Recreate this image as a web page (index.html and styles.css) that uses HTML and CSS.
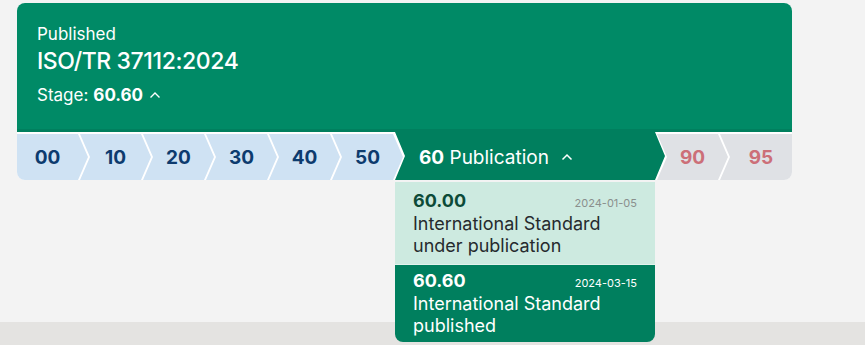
FILE: index.html
```html
<!DOCTYPE html>
<html lang="en">
<head>
    <meta charset="UTF-8">
    <meta name="viewport" content="width=device-width, initial-scale=1.0">
    <title>ISO/TR 37112:2024</title>
    <link rel="stylesheet" href="styles.css">
</head>
<body>
    <main class="page">
        <section class="card">
            <header class="card-head">
                <div class="status">Published</div>
                <h1 class="ref">ISO/TR 37112:2024</h1>
                <div class="stage-line">
                    Stage: <strong>60.60</strong>
                    <svg class="caret" width="12" height="8" viewBox="0 0 12 8"><path d="M1.5 6.5 L6 2 L10.5 6.5" fill="none" stroke="currentColor" stroke-width="1.4"/></svg>
                </div>
            </header>

            <ol class="stages">
                <li class="stage done first"><span class="shape">00</span></li>
                <li class="stage done"><span class="shape">10</span></li>
                <li class="stage done"><span class="shape">20</span></li>
                <li class="stage done"><span class="shape">30</span></li>
                <li class="stage done"><span class="shape">40</span></li>
                <li class="stage done"><span class="shape">50</span></li>
                <li class="stage current">
                    <span class="shape">
                        <strong>60</strong>&nbsp;Publication
                        <svg class="caret" width="12" height="8" viewBox="0 0 12 8"><path d="M1.5 6.5 L6 2 L10.5 6.5" fill="none" stroke="currentColor" stroke-width="1.5"/></svg>
                    </span>
                    <div class="substages">
                        <div class="substage">
                            <div class="sub-top">
                                <span class="sub-code">60.00</span>
                                <span class="sub-date">2024-01-05</span>
                            </div>
                            <div class="sub-name">International Standard under publication</div>
                        </div>
                        <div class="substage active">
                            <div class="sub-top">
                                <span class="sub-code">60.60</span>
                                <span class="sub-date">2024-03-15</span>
                            </div>
                            <div class="sub-name">International Standard published</div>
                        </div>
                    </div>
                </li>
                <li class="stage todo"><span class="shape">90</span></li>
                <li class="stage todo last"><span class="shape">95</span></li>
            </ol>
        </section>
    </main>
    <footer class="bottom-strip"></footer>
</body>
</html>
```

FILE: styles.css
```css
* {
    box-sizing: border-box;
}
body {
    font-family: Inter, "Noto Sans", Arial, sans-serif;
    margin: 0;
    height: 345px;
    display: flex;
    flex-direction: column;
    background-color: #f3f3f3;
    overflow: hidden;
}
.page {
    flex: 1;
    padding: 3px 0 0 17px;
}
.bottom-strip {
    height: 23px;
    background-color: #e4e3e1;
}
.card {
    width: 775px;
    background: #fff;
    border-radius: 8px;
    position: relative;
    z-index: 1;
}
.card-head {
    background-color: #008a66;
    color: #fff;
    border-radius: 8px 8px 0 0;
    border-bottom: 3px solid #007f5e;
    height: 129px;
    padding: 21px 20px 0 20px;
}
.status {
    font-size: 17px;
    line-height: 20px;
}
.ref {
    margin: 2px 0 0 0;
    font-size: 23px;
    font-weight: 500;
    letter-spacing: -0.4px;
    line-height: 30px;
}
.stage-line {
    margin-top: 8px;
    font-size: 17px;
    line-height: 22px;
    display: flex;
    align-items: center;
    gap: 5px;
}
.stage-line strong {
    font-weight: 700;
}
.stage-line .caret {
    margin-left: 1px;
}
.stages {
    list-style: none;
    margin: 2px 0 0 0;
    padding: 0;
    display: flex;
    height: 46px;
}
.stage {
    position: relative;
    margin-left: -8px;
    width: 71px;
}
.stage.first {
    margin-left: 0;
}
.shape {
    display: flex;
    align-items: center;
    justify-content: center;
    height: 100%;
    font-size: 19px;
    font-weight: 700;
    padding-left: 10px;
    padding-right: 10px;
    clip-path: polygon(0 0, calc(100% - 10px) 0, 100% 50%, calc(100% - 10px) 100%, 0 100%, 10px 50%);
}
.first .shape {
    padding-left: 0;
    border-bottom-left-radius: 8px;
    clip-path: polygon(0 0, calc(100% - 10px) 0, 100% 50%, calc(100% - 10px) 100%, 0 100%);
}
.last .shape {
    padding-right: 0;
    border-bottom-right-radius: 8px;
    clip-path: polygon(0 0, 100% 0, 100% 100%, 0 100%, 10px 50%);
}
.stage.last {
    width: 72px;
}
.done .shape {
    background-color: #cfe2f3;
    color: #0d3b6e;
}
.todo .shape {
    background-color: #dfe1e5;
    color: #cc6f78;
}
.stage.current {
    width: 270px;
    margin-top: -2px;
    height: 48px;
}
.current .shape {
    background-color: #007f5e;
    color: #fff;
    justify-content: flex-start;
    padding-left: 24px;
    padding-top: 2px;
    font-weight: 400;
}
.current .shape strong {
    font-weight: 700;
}
.current .shape .caret {
    margin-left: 12px;
}
.substages {
    position: absolute;
    top: 50px;
    left: 0;
    width: 260px;
    display: flex;
    flex-direction: column;
}
.substage {
    background-color: #cdeae0;
    color: #262a2e;
    padding: 8px 18px 7px 18px;
}
.substage.active {
    background-color: #007f5e;
    color: #fff;
    border-top: 1px solid #e3f3ed;
    border-radius: 0 0 8px 8px;
    padding-top: 5px;
    padding-bottom: 5px;
}
.sub-top {
    display: flex;
    justify-content: space-between;
    align-items: baseline;
}
.sub-code {
    font-size: 18px;
    font-weight: 700;
    line-height: 22px;
    color: #0c4a38;
}
.active .sub-code {
    color: #fff;
}
.sub-date {
    font-size: 11px;
    color: #8a8f8d;
}
.active .sub-date {
    color: #fff;
}
.sub-name {
    font-size: 18px;
    line-height: 22px;
    margin-top: 1px;
}
```
